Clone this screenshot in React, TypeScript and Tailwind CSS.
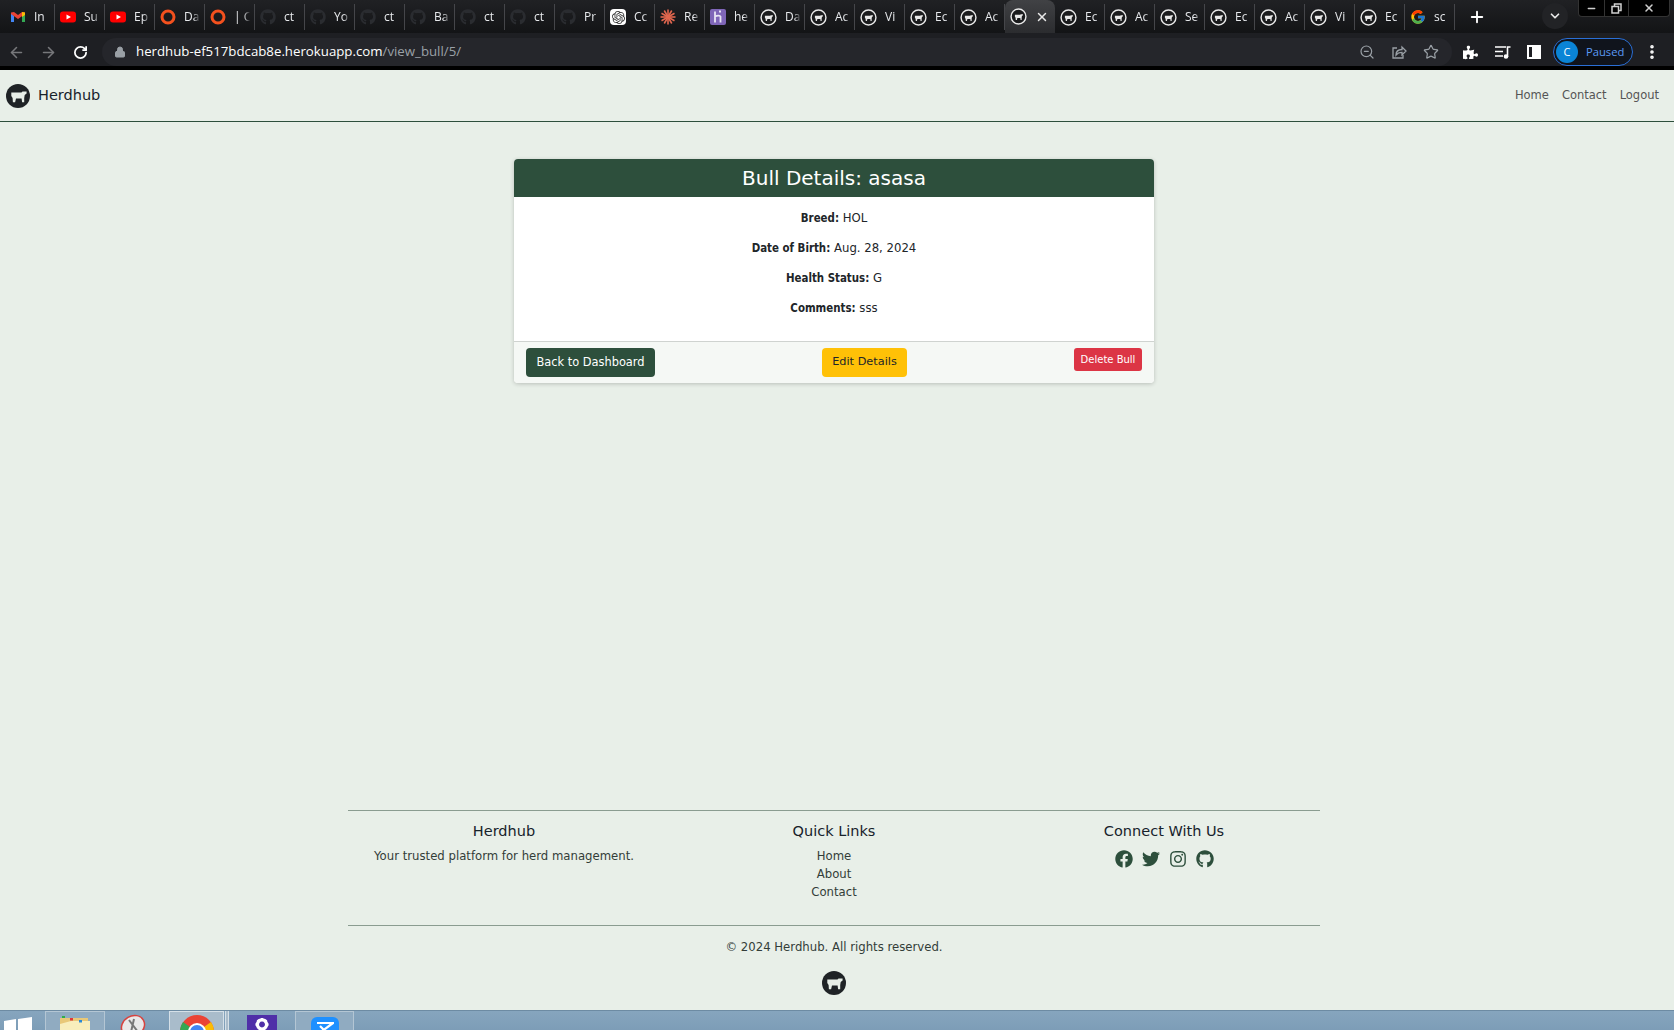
import { ArrowLeft, ArrowRight, ChevronDown, EllipsisVertical, Lock, Minus, Plus, RotateCw, Star, X, ZoomOut } from 'lucide-react';
import { FaFacebook, FaGithub, FaInstagram, FaTwitter, FaPuzzlePiece } from 'react-icons/fa';
import { FcGoogle } from 'react-icons/fc';
import { SiOpenai } from 'react-icons/si';

const COW =
  'M5.300 8.600H15.500L16.500 7.500H20.600V9.500L18.700 11 18.200 14V18.200H16.100L15.600 14.600H10L9.100 18.200H6.900L6.600 14 5.300 12z';

function CowLogo({ size = 24, ring = false }: { size?: number; ring?: boolean }) {
  return (
    <svg width={size} height={size} viewBox="0 0 24 24" className="shrink-0">
      {ring ? (
        <>
          <circle cx="12" cy="12" r="10.500" fill="#1a1b1d" stroke="#e8e8e8" strokeWidth="2" />
          <path d={COW} fill="#e8e8e8" transform="translate(3 3.300) scale(0.74)" />
        </>
      ) : (
        <>
          <circle cx="12" cy="12" r="12" fill="#1f2326" />
          <path d={COW} fill="#e8efe8" />
        </>
      )}
    </svg>
  );
}

function Gmail() {
  return (
    <svg width="16" height="16" viewBox="0 0 16 16" className="shrink-0">
      <path d="M1 4v9h3V7z" fill="#4285f4" />
      <path d="M15 4v9h-3V7z" fill="#34a853" />
      <path d="M1 3.500 4 3l4 3 4-3 3 .5V5l-7 5-7-5z" fill="#ea4335" />
      <path d="M12 3l3 .5V6l-3 2z" fill="#fbbc04" />
    </svg>
  );
}

function Youtube() {
  return (
    <svg width="16" height="16" viewBox="0 0 16 16" className="shrink-0">
      <rect y="2.500" width="16" height="11" rx="3" fill="#ff0000" />
      <path d="M6.500 5.500v5L11 8z" fill="#fff" />
    </svg>
  );
}

function OrangeRing() {
  return (
    <svg width="16" height="16" viewBox="0 0 16 16" className="shrink-0">
      <circle cx="8" cy="8" r="6" fill="none" stroke="#f4511e" strokeWidth="3" />
    </svg>
  );
}

function Burst() {
  const rays = [0, 30, 60, 90, 120, 150, 180, 210, 240, 270, 300, 330];
  return (
    <svg width="16" height="16" viewBox="0 0 16 16" className="shrink-0">
      {rays.map((r) => (
        <line key={r} x1="8" y1="8" x2="8" y2="0.500" stroke="#e2674f" strokeWidth="1.600" transform={`rotate(${r} 8 8)`} />
      ))}
    </svg>
  );
}

function Heroku() {
  return (
    <svg width="16" height="16" viewBox="0 0 16 16" className="shrink-0">
      <rect width="16" height="16" rx="2" fill="#7f66b8" />
      <path d="M5 2.500v11M5 7.500c2-1 5-1.500 5.500 0v6M9 2.500h2" stroke="#e8e4f4" strokeWidth="1.800" fill="none" />
    </svg>
  );
}

type Tab = { icon: string; label: string; active?: boolean };

const tabs: Tab[] = [
  { icon: 'gmail', label: 'In' },
  { icon: 'yt', label: 'Su' },
  { icon: 'yt', label: 'Ep' },
  { icon: 'ring', label: 'Da' },
  { icon: 'ring', label: '| C' },
  { icon: 'gh', label: 'ct' },
  { icon: 'gh', label: 'Yo' },
  { icon: 'gh', label: 'ct' },
  { icon: 'gh', label: 'Ba' },
  { icon: 'gh', label: 'ct' },
  { icon: 'gh', label: 'ct' },
  { icon: 'gh', label: 'Pr' },
  { icon: 'ai', label: 'Cc' },
  { icon: 'burst', label: 'Re' },
  { icon: 'heroku', label: 'he' },
  { icon: 'cow', label: 'Da' },
  { icon: 'cow', label: 'Ac' },
  { icon: 'cow', label: 'Vi' },
  { icon: 'cow', label: 'Ec' },
  { icon: 'cow', label: 'Ac' },
  { icon: 'cow', label: '', active: true },
  { icon: 'cow', label: 'Ec' },
  { icon: 'cow', label: 'Ac' },
  { icon: 'cow', label: 'Se' },
  { icon: 'cow', label: 'Ec' },
  { icon: 'cow', label: 'Ac' },
  { icon: 'cow', label: 'Vi' },
  { icon: 'cow', label: 'Ec' },
  { icon: 'google', label: 'sc' },
];

function TabIcon({ icon }: { icon: string }) {
  if (icon === 'gmail') return <Gmail />;
  if (icon === 'yt') return <Youtube />;
  if (icon === 'ring') return <OrangeRing />;
  if (icon === 'gh') return <FaGithub size={16} className="shrink-0 text-[#2a2c30]" />;
  if (icon === 'ai')
    return (
      <div className="w-4 h-4 shrink-0 rounded-sm bg-white flex items-center justify-center">
        <SiOpenai size={13} className="text-[#333]" />
      </div>
    );
  if (icon === 'burst') return <Burst />;
  if (icon === 'heroku') return <Heroku />;
  if (icon === 'google') return <FcGoogle size={16} className="shrink-0" />;
  return <CowLogo size={17} ring />;
}

function TabStrip() {
  return (
    <div className="h-[33px] shrink-0 bg-gradient-to-b from-[#202124] to-[#131416] flex items-start pl-[5px] relative font-['Open_Sans',sans-serif]">
      {tabs.map((tab, i) => (
        <div
          key={i}
          className={`w-[50px] shrink-0 flex items-center gap-[8px] pl-[5px] overflow-hidden ${
            tab.active
              ? 'h-[33px] -mb-px bg-gradient-to-b from-[#414245] to-[#2b2c2f] rounded-t-lg'
              : 'h-[26px] mt-[4px] border-r border-[#45464a] last:border-r-0'
          }`}
        >
          <TabIcon icon={tab.icon} />
          {tab.active ? (
            <X size={14} className="text-[#e8e8e8] shrink-0" strokeWidth={2.5} />
          ) : (
            <span className="text-[12px] text-[#e8eaed] w-[16px] whitespace-nowrap [mask-image:linear-gradient(to_right,black_60%,transparent)]">
              {tab.label}
            </span>
          )}
        </div>
      ))}
      <Plus size={18} strokeWidth={2.5} className="text-white absolute left-[1468px] top-[8px]" />
      <div className="absolute left-[1542px] top-[3px] w-[26px] h-[26px] rounded-full bg-[#222326] flex items-center justify-center">
        <ChevronDown size={14} strokeWidth={3} className="text-[#e8e8e8]" />
      </div>
      <div className="absolute left-[1578px] top-0 w-[92px] h-[17px] border border-t-0 border-[#333] rounded-b-sm bg-black flex items-center text-[#cfcfcf]">
        <div className="w-[25px] flex justify-center">
          <Minus size={11} strokeWidth={3} />
        </div>
        <div className="w-[25px] flex justify-center border-x border-[#333] h-full items-center">
          <svg width="11" height="11" viewBox="0 0 11 11" fill="none" stroke="currentColor" strokeWidth="1.500">
            <rect x="1" y="3.500" width="6.500" height="6.500" />
            <path d="M3.500 3V1h6.500v6.500H8" />
          </svg>
        </div>
        <div className="flex-1 flex justify-center">
          <X size={12} strokeWidth={3} />
        </div>
      </div>
    </div>
  );
}

function Toolbar() {
  return (
    <div className="shrink-0 h-[37px] bg-[#000] font-['Open_Sans',sans-serif]">
      <div className="h-[33px] pt-[5px] bg-[#1e1f23] flex items-center">
        <ArrowLeft size={17} strokeWidth={2.2} className="text-[#77787b] ml-[8px]" />
        <ArrowRight size={17} strokeWidth={2.2} className="text-[#77787b] ml-[15px]" />
        <RotateCw size={15} strokeWidth={2.8} className="text-white ml-[16px]" />
        <div className="ml-[14px] w-[1350px] h-[28px] rounded-full bg-[#25262b] flex items-center">
          <Lock size={12} className="text-[#9aa0a6] ml-[12px] fill-[#9aa0a6]" />
          <span className="ml-[10px] text-[13.250px] text-white">
            herdhub-ef517bdcab8e.herokuapp.com<span className="text-[#9aa0a6]">/view_bull/5/</span>
          </span>
          <div className="ml-auto flex items-center gap-[16px] pr-[13px] text-[#9aa0a6]">
            <ZoomOut size={16} strokeWidth={1.8} />
            <svg width="16" height="16" viewBox="0 0 16 16" fill="none" stroke="currentColor" strokeWidth="1.300">
              <path d="M6 4H2v10h10v-3" />
              <path d="M5 11c0-3.500 2.500-5.500 6-5.500V3l4 4-4 4V8.300c-2.500 0-4.500.7-6 2.700z" />
            </svg>
            <Star size={16} strokeWidth={1.8} />
          </div>
        </div>
        <FaPuzzlePiece size={15} className="text-white ml-[11px]" />
        <svg width="16" height="14" viewBox="0 0 16 14" fill="none" stroke="#fff" strokeWidth="1.600" className="ml-[17px]">
          <path d="M0 2h11M0 6.500h8M0 11h8" />
          <path d="M12.500 12V2h3" />
          <circle cx="11" cy="11.500" r="1.500" fill="#fff" />
        </svg>
        <div className="ml-[16px] w-[14px] h-[14px] border-2 border-white flex justify-end">
          <div className="w-[7px] h-full bg-white" />
        </div>
        <div className="ml-[12px] w-[80px] h-[28px] rounded-full border border-[#2a6fd6] bg-[#10141c] flex items-center pl-[2px]">
          <div className="w-[22px] h-[22px] rounded-full bg-[#0a84d6] text-white text-[11px] flex items-center justify-center">
            C
          </div>
          <span className="ml-[8px] text-[11.200px] text-[#5b9bf5]">Paused</span>
        </div>
        <EllipsisVertical size={18} strokeWidth={2.8} className="text-white ml-[10px]" />
      </div>
    </div>
  );
}

function NavBar() {
  return (
    <nav className="h-[52px] shrink-0 border-b border-[#2d4f3c] flex items-center pl-[6px] pr-[15px]">
      <CowLogo size={24} />
      <span className="ml-[8px] text-[14.500px] text-[#17222b]">Herdhub</span>
      <div className="ml-auto flex items-center gap-[13px] text-[11.500px] text-[#555]">
        <span>Home</span>
        <span>Contact</span>
        <span>Logout</span>
      </div>
    </nav>
  );
}

const details = [
  { label: 'Breed:', value: 'HOL' },
  { label: 'Date of Birth:', value: 'Aug. 28, 2024' },
  { label: 'Health Status:', value: 'G' },
  { label: 'Comments:', value: 'sss' },
];

function BullCard() {
  return (
    <div className="w-[640px] mx-auto mt-[37px] rounded-[4px] bg-white shadow-[0_1px_4px_rgba(0,0,0,0.2)] overflow-hidden">
      <div className="h-[38px] bg-[#2d4f3c] text-white text-[20px] flex items-center justify-center">
        Bull Details: asasa
      </div>
      <div className="h-[144px] pt-[12px] text-[11.700px] text-[#212529] flex flex-col items-center">
        {details.map((d) => (
          <p key={d.label} className="h-[30px] leading-[18px]">
            <b className="font-bold text-[11.400px] [font-stretch:condensed]">{d.label}</b> {d.value}
          </p>
        ))}
      </div>
      <div className="h-[42px] bg-[#f5f8f5] border-t border-[#cfd3d0] pt-[6px] px-[12px] flex items-start justify-between">
        <button className="w-[129px] h-[29px] rounded-[4px] bg-[#2d4f3c] text-white text-[11.400px]">Back to Dashboard</button>
        <button className="w-[85px] h-[29px] rounded-[4px] bg-[#ffc107] text-[#212529] text-[11.300px]">Edit Details</button>
        <button className="w-[68px] h-[23px] rounded-[3px] bg-[#dc3545] text-white text-[10px]">Delete Bull</button>
      </div>
    </div>
  );
}

function Footer() {
  return (
    <footer className="w-[972px] mx-auto text-center text-[#333d38] text-[11.700px] mt-auto">
      <div className="h-[116px] border-y border-[#8a9c90] -mb-px pt-[10px]">
        <div className="flex -mx-[9px]">
          <div className="w-[330px]">
            <h5 className="text-[14.500px] leading-[20px] text-[#17222b] mb-[6px]">Herdhub</h5>
            <p className="leading-[18px]">Your trusted platform for herd management.</p>
          </div>
          <div className="w-[330px]">
            <h5 className="text-[14.500px] leading-[20px] text-[#17222b] mb-[6px]">Quick Links</h5>
            <p className="leading-[18px]">Home</p>
            <p className="leading-[18px]">About</p>
            <p className="leading-[18px]">Contact</p>
          </div>
          <div className="w-[330px]">
            <h5 className="text-[14.500px] leading-[20px] text-[#17222b] mb-[6px]">Connect With Us</h5>
            <div className="flex justify-center gap-[9px] text-[#2d4f3c] mt-[9px]">
              <FaFacebook size={18} />
              <FaTwitter size={18} />
              <FaInstagram size={18} />
              <FaGithub size={18} />
            </div>
          </div>
        </div>
      </div>
      <div className="h-[85px] pt-[13px] flex flex-col items-center">
        <p className="leading-[18px]">© 2024 Herdhub. All rights reserved.</p>
        <div className="mt-[15px]">
          <CowLogo size={24} />
        </div>
      </div>
    </footer>
  );
}

function Taskbar() {
  return (
    <div className="h-[20px] shrink-0 bg-gradient-to-b from-[#86a5be] to-[#7d9db7] border-t border-[#6d8ba3] flex items-start overflow-hidden">
      <svg width="28" height="14" viewBox="0 0 28 14" className="ml-[4px] mt-[6px]">
        <path d="M0 4l12-2v12H0zM14 2l14-2v14H14z" fill="#fff" />
      </svg>
      <div className="ml-[13px] w-[60px] h-[20px] bg-[#90abc1] border border-[#b4c6d4] flex justify-center pt-[4px]">
        <svg width="32" height="16" viewBox="0 0 32 16">
          <path d="M1 2h28v14H1z" fill="#e8c878" />
          <path d="M1 8l11-3h19v11H1z" fill="#f8eebc" />
          <rect x="3" y="0" width="3" height="2" fill="#2fae4a" />
          <rect x="11" y="2" width="3" height="2.500" fill="#e0393a" />
          <rect x="20" y="4" width="3" height="2.500" fill="#2a8ad6" />
        </svg>
      </div>
      <svg width="26" height="18" viewBox="0 0 26 18" className="ml-[15px] mt-[3px]">
        <ellipse cx="13" cy="12" rx="12" ry="10" transform="rotate(-30 13 12)" fill="#e9e9e9" stroke="#d8433f" strokeWidth="1.500" />
        <path d="M9 6l9 12M14 5l-3 13" stroke="#777" strokeWidth="2" />
      </svg>
      <div className="ml-[23px] w-[55px] h-[20px] bg-[#a9bccb] border border-[#d5e0e8] flex justify-center pt-[3px]">
        <svg width="34" height="17" viewBox="0 0 34 17">
          <circle cx="17" cy="17" r="17" fill="#ea4335" />
          <path d="M17 17 34 17A17 17 0 0 0 31 7z" fill="#fbbc04" />
          <path d="M17 17H0A17 17 0 0 1 3 7z" fill="#34a853" />
          <circle cx="17" cy="17" r="9" fill="#fff" />
          <circle cx="17" cy="17" r="7" fill="#4285f4" />
        </svg>
      </div>
      <div className="ml-[1px] w-[4px] h-[20px] bg-[#a9bccb] border-x border-[#d5e0e8]" />
      <div className="ml-[18px] w-[30px] h-[20px] mt-[4px] bg-[#4f2fa8] flex justify-center pt-[3px]">
        <svg width="20" height="13" viewBox="0 0 20 20">
          <path d="M10 3a7 7 0 1 0 .01 0z" fill="none" stroke="#fff" strokeWidth="5" />
          <path d="M10 0v4M3 3l3 3M17 3l-3 3M0 10h4M16 10h4" stroke="#fff" strokeWidth="3.500" />
        </svg>
      </div>
      <div className="ml-[18px] w-[59px] h-[20px] bg-[#90abc1] border border-[#b4c6d4] flex justify-center pt-[5px]">
        <div className="w-[28px] h-[20px] rounded-t-md bg-[#1e90ff] flex justify-center pt-[5px]">
          <svg width="18" height="10" viewBox="0 0 18 10" fill="none" stroke="#fff" strokeWidth="2.200">
            <path d="M1 1h16L5 10M4 4l6 6" />
          </svg>
        </div>
      </div>
    </div>
  );
}

export default function App() {
  return (
    <div className="w-[1674px] h-[1030px] overflow-hidden flex flex-col bg-[#e8efe8] font-['DejaVu_Sans',sans-serif]">
      <TabStrip />
      <Toolbar />
      <NavBar />
      <main className="flex-1 flex flex-col w-[1668px] min-h-0">
        <BullCard />
        <Footer />
      </main>
      <Taskbar />
    </div>
  );
}
